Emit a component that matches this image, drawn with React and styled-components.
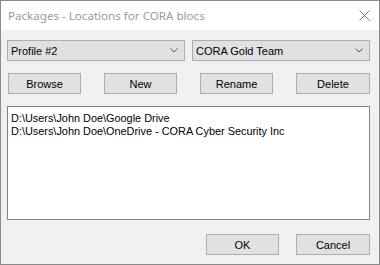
import React from "react";
import styled, { createGlobalStyle } from "styled-components";

const Global = createGlobalStyle`
  html, body { margin: 0; padding: 0; background: #ffffff; }
  * { box-sizing: border-box; }
`;

const Window = styled.div`
  width: 380px;
  height: 265px;
  border: 1px solid #8a8a8a;
  background: #f0f0f0;
  display: flex;
  flex-direction: column;
  font-family: "Liberation Sans", Arial, sans-serif;
  font-size: 11px;
  color: #000;
`;

const TitleBar = styled.div`
  height: 29px;
  background: #ffffff;
  display: flex;
  align-items: center;
  justify-content: space-between;
  padding: 0 9px 0 7px;
`;

const Title = styled.span`
  font-family: "Noto Sans", "Open Sans", sans-serif;
  font-size: 11.6px;
  color: #9a9a9a;
  margin-top: -1px;
`;

const Body = styled.div`
  flex: 1;
  display: flex;
  flex-direction: column;
  padding: 10px 9px 9px 6px;
`;

const ComboRow = styled.div`
  display: grid;
  grid-template-columns: 178px 178px;
  column-gap: 7px;
`;

const Combo = styled.div`
  height: 21px;
  background: #e1e1e1;
  border: 1px solid #adadad;
  display: flex;
  align-items: center;
  justify-content: space-between;
  padding: 0 6px 0 3px;
`;

const ButtonRow = styled.div`
  margin-top: 12px;
  padding-left: 1px;
  display: flex;
  justify-content: space-between;
`;

const Button = styled.div`
  width: ${(p) => p.$w || 73}px;
  height: 21px;
  background: #e1e1e1;
  border: 1px solid #adadad;
  display: flex;
  align-items: center;
  justify-content: center;
`;

const List = styled.div`
  margin-top: 12px;
  height: 114px;
  background: #ffffff;
  border: 1px solid #828282;
  padding: 5px 3px;
  line-height: 13px;
  font-size: 10.9px;
`;

const Footer = styled.div`
  margin-top: 14px;
  display: flex;
  justify-content: flex-end;
  gap: 17px;
`;

const Chevron = () => (
  <svg width="8" height="5" viewBox="0 0 8 5">
    <path d="M0.5 0.5 L4 4 L7.5 0.5" fill="none" stroke="#555" strokeWidth="1" />
  </svg>
);

const CloseIcon = () => (
  <svg width="11" height="11" viewBox="0 0 11 11">
    <path d="M0.5 0.5 L10.5 10.5 M10.5 0.5 L0.5 10.5" stroke="#7a7a7a" strokeWidth="1" />
  </svg>
);

export default function App() {
  return (
    <>
      <Global />
      <Window>
        <TitleBar>
          <Title>Packages - Locations for CORA blocs</Title>
          <CloseIcon />
        </TitleBar>
        <Body>
          <ComboRow>
            <Combo>
              <span>Profile #2</span>
              <Chevron />
            </Combo>
            <Combo>
              <span>CORA Gold Team</span>
              <Chevron />
            </Combo>
          </ComboRow>
          <ButtonRow>
            <Button>Browse</Button>
            <Button>New</Button>
            <Button>Rename</Button>
            <Button $w={74}>Delete</Button>
          </ButtonRow>
          <List>
            <div>D:\Users\John Doe\Google Drive</div>
            <div>D:\Users\John Doe\OneDrive - CORA Cyber Security Inc</div>
          </List>
          <Footer>
            <Button>OK</Button>
            <Button $w={74}>Cancel</Button>
          </Footer>
        </Body>
      </Window>
    </>
  );
}
